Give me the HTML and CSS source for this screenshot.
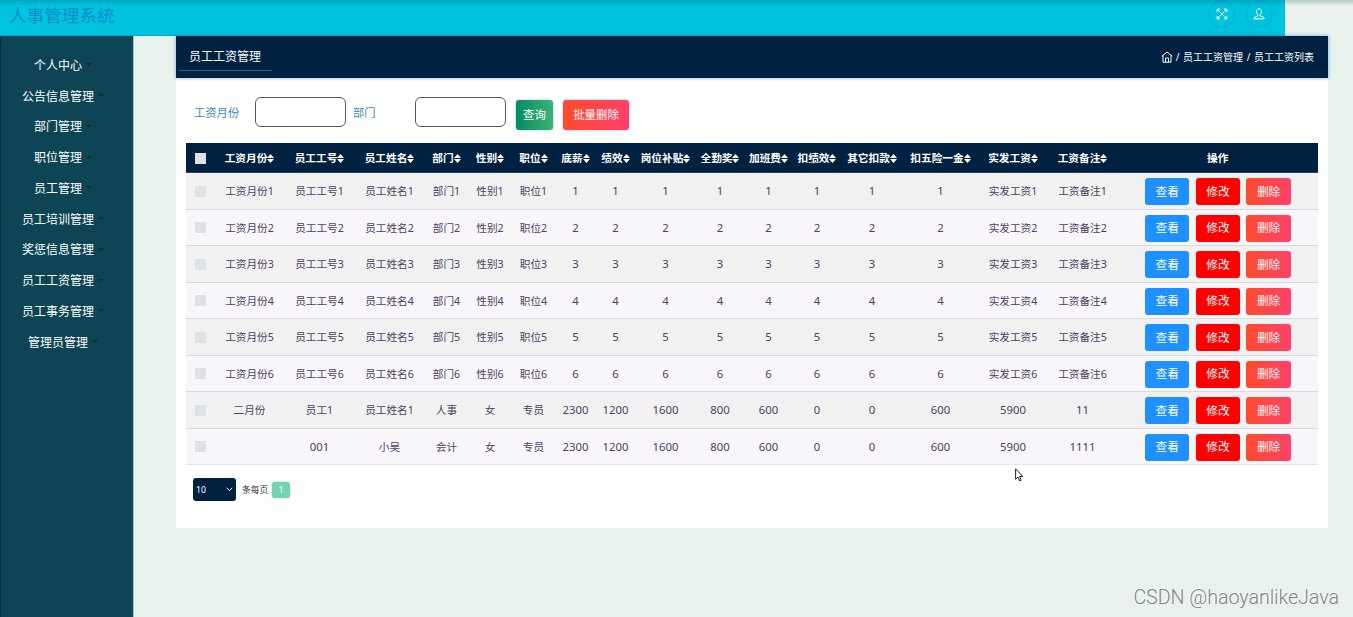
FILE: index.html
```html
<!DOCTYPE html>
<html lang="zh-CN">
<head>
  <meta charset="UTF-8" />
  <meta name="viewport" content="width=device-width, initial-scale=1.0"/>
  <title>人事管理系统</title>
  <link rel="stylesheet" href="styles.css">
</head>
<body>
  <header class="topbar">
    <h1>人事管理系统</h1>
    <div class="topbar-icons">
      <a class="round-btn">
        <svg width="12" height="12" viewBox="0 0 12 12"><path d="M1.5 1.5l9 9M10.5 1.5l-9 9M1.2 4V1.2H4M8 1.2h2.8V4M1.2 8v2.8H4M8 10.8h2.8V8"/></svg>
      </a>
      <a class="round-btn">
        <svg width="12" height="12" viewBox="0 0 12 12"><path d="M6 .8C4.400.8 3.500 2 3.500 3.700c0 1.300.6 2.300 1.400 2.900v1.300L1.500 9.200.8 10.900h10.400l-.7-1.700-3.400-1.300V6.600c.8-.6 1.400-1.600 1.400-2.900C8.500 2 7.600.8 6 .8z"/></svg>
      </a>
    </div>
  </header>

  <div class="wrapper">
    <nav class="sidebar">
      <a>个人中心</a>
      <a>公告信息管理</a>
      <a>部门管理</a>
      <a>职位管理</a>
      <a>员工管理</a>
      <a>员工培训管理</a>
      <a>奖惩信息管理</a>
      <a>员工工资管理</a>
      <a>员工事务管理</a>
      <a>管理员管理</a>
    </nav>

    <main class="content">
      <div class="page-title">
        <h3>员工工资管理</h3>
        <div class="breadcrumb">
          <svg width="12" height="12" viewBox="0 0 12 12"><path d="M.8 5.200L6 1l5.200 4.200M2 4.500v6.700h8V4.500M4.500 11V7h3v4"/></svg>
          <span>/ 员工工资管理 / 员工工资列表</span>
        </div>
      </div>

      <div class="search">
        <label class="label-month" for="month">工资月份</label>
        <input type="text" id="month" />
        <label class="label-dept" for="dept">部门</label>
        <input type="text" id="dept" />
        <button class="btn-search">查询</button>
        <button class="btn-batch">批量删除</button>
      </div>

      <table>
        <colgroup>
          <col class="w28"><col class="w70"><col class="w70"><col class="w70">
          <col class="w44"><col class="w43"><col class="w44"><col class="w40"><col class="w40">
          <col class="w60"><col class="w49"><col class="w48"><col class="w49"><col class="w61">
          <col class="w76"><col class="w69"><col class="w70"><col>
        </colgroup>
        <thead>
          <tr id="tableHead"></tr>
        </thead>
        <tbody id="tableBody">
          <!-- Rows via JS -->
        </tbody>
      </table>

      <div class="pager">
        <div class="page-size">10
          <svg width="7" height="5" viewBox="0 0 7 5"><path d="M.7.8l2.800 2.800L6.300.8"/></svg>
        </div>
        <span>条每页</span>
        <a class="page-num">1</a>
      </div>
    </main>
  </div>

  <svg class="cursor" width="9" height="14" viewBox="0 0 9 14"><path d="M.6.8v10.400l2.300-2.100 1.700 3.800 1.600-.7-1.700-3.700h3.200z"/></svg>
  <div class="watermark">CSDN @haoyanlikeJava</div>

  <script>
    const columns = ["工资月份", "员工工号", "员工姓名", "部门", "性别", "职位", "底薪", "绩效",
      "岗位补贴", "全勤奖", "加班费", "扣绩效", "其它扣款", "扣五险一金", "实发工资", "工资备注"];

    const rows = [];
    for (let i = 1; i <= 6; i++) {
      rows.push(["工资月份" + i, "员工工号" + i, "员工姓名" + i, "部门" + i, "性别" + i, "职位" + i,
        i, i, i, i, i, i, i, i, "实发工资" + i, "工资备注" + i]);
    }
    rows.push(["二月份", "员工1", "员工姓名1", "人事", "女", "专员", 2300, 1200, 1600, 800, 600, 0, 0, 600, 5900, 11]);
    rows.push(["", "001", "小吴", "会计", "女", "专员", 2300, 1200, 1600, 800, 600, 0, 0, 600, 5900, 1111]);

    const sortIcon = '<svg class="sort" width="7" height="9" viewBox="0 0 7 9"><path d="M3.500 0L7 4H0zM3.500 9L7 5H0z"/></svg>';
    const checkbox = '<span class="checkbox"></span>';

    document.getElementById("tableHead").innerHTML =
      `<th>${checkbox}</th>` + columns.map(c => `<th>${c}${sortIcon}</th>`).join("") + "<th>操作</th>";

    document.getElementById("tableBody").innerHTML = rows.map(row => {
      const cells = row.map(v => `<td${/^\d+$/.test(v) ? ' class="num"' : ""}>${v}</td>`).join("");
      return `<tr><td>${checkbox}</td>${cells}<td><div class="actions">
        <button class="view">查看</button><button class="edit">修改</button><button class="del">删除</button>
      </div></td></tr>`;
    }).join("");
  </script>
</body>
</html>
```
FILE: styles.css
```css
* {
  box-sizing: border-box;
}

body {
  margin: 0;
  height: 617px;
  overflow: hidden;
  background: #e8f1ec;
  font-family: "Noto Sans", "Noto Sans CJK SC", sans-serif;
  font-size: 10.67px;
}

/* shadow along the top of the window */
body::before {
  content: "";
  position: absolute;
  top: 0;
  left: 0;
  width: 100%;
  height: 6px;
  background: linear-gradient(rgba(0, 60, 70, 0.22), transparent);
}

svg {
  fill: none;
  stroke: #fff;
}

.topbar {
  display: flex;
  justify-content: space-between;
  width: 1285px;
  height: 36px;
  padding: 0 14px 0 9px;
  background: #00c4df;
  border-bottom: 1px solid #12a5bb;
}

.topbar h1 {
  margin: 0;
  font-size: 17.6px;
  font-weight: 400;
  line-height: 30px;
  color: #0a8acb;
}

.topbar-icons {
  display: flex;
  gap: 13px;
  padding-top: 2px;
}

.round-btn {
  display: flex;
  align-items: center;
  justify-content: center;
  width: 24px;
  height: 24px;
  border-radius: 50%;
  box-shadow: 0 0 3px rgba(0, 80, 110, 0.4);
}

.wrapper {
  display: flex;
  height: 581px;
}

.sidebar {
  width: 134px;
  padding: 13.4px 8px 0 0;
  background: #0d4555;
  border-left: 1px solid #093440;
  border-right: 1px solid #a5c5cb;
}

.sidebar a {
  display: flex;
  align-items: center;
  justify-content: center;
  height: 30.75px;
  font-size: 12px;
  color: #fff;
}

.sidebar a::after {
  content: "";
  margin-left: 4px;
  border: 3px solid transparent;
  border-top-color: #0a3039;
  border-bottom: 0;
}

.content {
  width: 1152px;
  height: 492px;
  margin-left: 42px;
  background: #fff;
}

.page-title {
  display: flex;
  justify-content: space-between;
  height: 42px;
  padding: 0 14px 0 3px;
  background: #002140;
  box-shadow: 0 0 4px rgba(30, 120, 220, 0.6);
  color: #fff;
}

.page-title h3 {
  width: 93px;
  height: 35px;
  margin: 0;
  padding-left: 10px;
  border-bottom: 1px solid #17639f;
  font-size: 12px;
  font-weight: normal;
  line-height: 41px;
}

.breadcrumb {
  display: flex;
  align-items: center;
  gap: 3px;
  height: 41px;
  font-size: 10px;
  word-spacing: 1px;
}

.search {
  display: flex;
  height: 65px;
  padding: 19px 0 0 18px;
  font-size: 11.3px;
  color: #3f87b5;
}

.search label {
  line-height: 31px;
}

.label-month {
  width: 61px;
}

.label-dept {
  width: 62px;
  margin-left: 7px;
}

.search input {
  width: 91px;
  height: 30px;
  border: 1px solid #555;
  border-radius: 6px;
  background: #fff;
}

button {
  padding: 0;
  border: none;
  border-radius: 3px;
  font-family: inherit;
  line-height: 1;
  color: #fff;
}

.search button {
  height: 30px;
  margin-top: 3px;
  font-size: 11.4px;
  box-shadow: 0 0 3px rgba(40, 130, 230, 0.5);
}

.btn-search {
  width: 37px;
  margin-left: 10px;
  background: linear-gradient(90deg, #068a66, #3cb371);
}

.btn-batch {
  width: 66px;
  margin-left: 10px;
  background: linear-gradient(90deg, #ff4b2b, #ff416c);
}

table {
  width: 1132px;
  margin-left: 10px;
  border-collapse: separate;
  border-spacing: 0;
  table-layout: fixed;
  text-align: center;
}

.w28 { width: 28.5px; }
.w40 { width: 40px; }
.w43 { width: 43px; }
.w44 { width: 44px; }
.w48 { width: 48px; }
.w49 { width: 49px; }
.w60 { width: 60px; }
.w61 { width: 61px; }
.w69 { width: 69px; }
.w70 { width: 70px; }
.w76 { width: 76px; }

th, td {
  padding: 0;
  white-space: nowrap;
}

th {
  height: 30px;
  background: #002140;
  border-bottom: 1px solid #26425c;
  color: #fff;
}

td {
  height: 36.5px;
  background: #f8f6fa;
  border-bottom: 1px solid #d9d8dc;
  color: #4b4260;
}

tbody tr:nth-child(odd) td {
  background: #f1f1f1;
}

tbody tr:last-child td {
  border-bottom-color: #e6e5e8;
}

.num {
  font-size: 11.3px;
}

.sort {
  vertical-align: -1px;
  fill: #fff;
  stroke: none;
}

.checkbox {
  display: block;
  width: 11px;
  height: 11px;
  margin: 1px auto 0;
  background: #dee2e6;
}

th .checkbox {
  position: relative;
  left: 0.5px;
}

.actions {
  display: flex;
  gap: 6.3px;
  padding: 2px 0 0 27.5px;
}

.actions button {
  width: 44.4px;
  height: 27px;
  font-size: 11.7px;
}

.view {
  background: #1e90ff;
}

.edit {
  background: #f00;
}

.del {
  background: linear-gradient(90deg, #ff4b2b, #ff416c);
}

.pager {
  display: flex;
  align-items: center;
  padding: 13px 0 0 17px;
  font-size: 8.7px;
  color: #333;
}

.page-size {
  display: flex;
  align-items: center;
  justify-content: space-between;
  width: 43px;
  height: 23px;
  margin-right: 6px;
  padding: 0 3px;
  border-radius: 3px;
  background: #002140;
  color: #fff;
}

.page-num {
  width: 18px;
  height: 16px;
  margin-left: 4px;
  border-radius: 3px;
  background: #74d3b0;
  box-shadow: 0 0 2px rgba(40, 130, 200, 0.5);
  line-height: 16px;
  text-align: center;
  color: #fff;
}

.cursor {
  position: absolute;
  left: 1015px;
  top: 468px;
  fill: #fff;
  stroke: #222;
}

.watermark {
  position: absolute;
  right: 14px;
  bottom: 8px;
  font-family: Roboto, sans-serif;
  font-size: 19.6px;
  font-weight: 300;
  color: #7d8381;
  text-shadow: -1px -1px 0 #fff;
}
```
